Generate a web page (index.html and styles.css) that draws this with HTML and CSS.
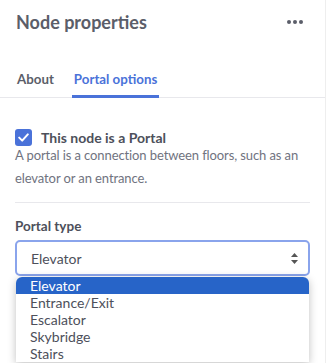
FILE: index.html
```html
<!DOCTYPE html>
<html lang="en">
<head>
  <meta charset="UTF-8" />
  <title>Node properties</title>
  <link rel="stylesheet" href="styles.css">
</head>
<body>
  <div class="panel">
    <div class="header">
      <h2>Node properties</h2>
      <span class="more"><i></i><i></i><i></i></span>
    </div>

    <div class="tabs">
      <span class="tab">About</span>
      <span class="tab active">Portal options</span>
    </div>

    <div class="content">
      <label class="check">
        <span class="box">
          <svg width="11" height="9" viewBox="0 0 11 9"><path d="M1.2 4.6l3 3L9.8 1.4" fill="none" stroke="#fff" stroke-width="2" stroke-linecap="round" stroke-linejoin="round"/></svg>
        </span>
        This node is a Portal
      </label>
      <p class="hint">A portal is a connection between floors, such as an elevator or an entrance.</p>

      <div class="field">
        <div class="field-label">Portal type</div>
        <div class="select-wrap">
          <div class="select">
            <span>Elevator</span>
            <svg class="arrows" width="7" height="11" viewBox="0 0 7 11"><path d="M3.5 0L7 4H0z M3.5 11L0 7h7z" fill="#555"/></svg>
          </div>
          <ul class="options">
            <li class="selected">Elevator</li>
            <li>Entrance/Exit</li>
            <li>Escalator</li>
            <li>Skybridge</li>
            <li>Stairs</li>
          </ul>
        </div>
      </div>
    </div>
  </div>
</body>
</html>
```

FILE: styles.css
```css
* {
  box-sizing: border-box;
  font-family: 'Lato', sans-serif;
}
body {
  margin: 0;
  background: #ffffff;
  color: #5b5e69;
  overflow: hidden;
}
.panel {
  width: 326px;
  height: 363px;
  border-right: 1px solid #eeeeee;
}
.header {
  display: flex;
  justify-content: space-between;
  align-items: center;
  padding: 0 22px 0 16px;
  height: 44px;
}
.header h2 {
  margin: 0;
  font-size: 18px;
  font-weight: 700;
  color: #5b5e69;
}
.more {
  display: flex;
  gap: 2px;
}
.more i {
  width: 4px;
  height: 4px;
  border-radius: 50%;
  background: #5b5e69;
}
.tabs {
  display: flex;
  gap: 16px;
  margin-top: 27px;
  padding: 0 15px;
  border-bottom: 1px solid #e8e8ec;
}
.tab {
  padding: 0 2px 8px;
  font-size: 13.3px;
  font-weight: 700;
  color: #5b5e69;
  border-bottom: 3px solid transparent;
  margin-bottom: -1px;
}
.tab.active {
  color: #4a72d9;
  border-bottom-color: #4a72d9;
}
.content {
  padding: 31px 15px 0;
}
.check {
  display: flex;
  align-items: center;
  gap: 9px;
  font-size: 14px;
  font-weight: 700;
  color: #4d505b;
}
.box {
  width: 17px;
  height: 17px;
  border-radius: 3px;
  background: #4a72d9;
  display: flex;
  align-items: center;
  justify-content: center;
}
.hint {
  margin: -2px 0 0;
  padding-bottom: 12px;
  font-size: 13px;
  letter-spacing: -0.1px;
  line-height: 23px;
  color: #707380;
  border-bottom: 1px solid #e8e8ec;
}
.field {
  padding-top: 15px;
}
.field-label {
  font-size: 13.5px;
  font-weight: 700;
  color: #4d505b;
  margin-bottom: 6px;
}
.select-wrap {
  position: relative;
}
.select {
  height: 36px;
  border: 2px solid #8aa4ec;
  border-radius: 5px;
  display: flex;
  align-items: center;
  justify-content: space-between;
  padding: 0 10px 0 14px;
  font-size: 14px;
  color: #4d505b;
}
.options {
  position: absolute;
  top: 37px;
  left: 1px;
  right: 1px;
  margin: 0;
  padding: 0;
  list-style: none;
  background: #ffffff;
  border-radius: 6px 6px 0 0;
  box-shadow: 0 2px 8px rgba(0, 0, 0, 0.25);
}
.options li {
  padding: 0 14px;
  height: 17px;
  line-height: 17px;
  font-size: 14px;
  color: #4d505b;
}
.options li.selected {
  background: #2764c8;
  color: #ffffff;
  border-radius: 6px 6px 0 0;
}
```
